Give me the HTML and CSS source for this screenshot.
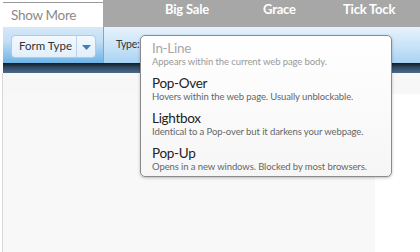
FILE: index.html
```html
<!DOCTYPE html>
<html>
<head>
<meta charset="utf-8">
<link rel="stylesheet" href="styles.css">
</head>
<body>
<div class="page">
  <div class="nav">
    <div class="tab-active">Show More</div>
    <div class="tabs">
      <span class="tab t1">Big Sale</span>
      <span class="tab t2">Grace</span>
      <span class="tab t3">Tick Tock</span>
    </div>
  </div>
  <div class="toolbar">
    <div class="tb-left">
      <div class="select">
        <span class="select-label">Form Type</span>
        <span class="select-arrow"><svg width="9" height="5" viewBox="0 0 9 5"><path d="M0 0H9L4.5 5Z" fill="#3b7fc0"/></svg></span>
      </div>
    </div>
    <div class="tb-right">
      <span class="type-label">Type:</span>
    </div>
  </div>
  <div class="darkbar"></div>
  <div class="content">
    <div class="strip"></div>
    <div class="main"></div>
  </div>
</div>
<div class="popup">
  <div class="item disabled">
    <div class="title">In-Line</div>
    <div class="desc">Appears within the current web page body.</div>
  </div>
  <div class="item">
    <div class="title">Pop-Over</div>
    <div class="desc">Hovers within the web page. Usually unblockable.</div>
  </div>
  <div class="item">
    <div class="title">Lightbox</div>
    <div class="desc">Identical to a Pop-over but it darkens your webpage.</div>
  </div>
  <div class="item">
    <div class="title">Pop-Up</div>
    <div class="desc">Opens in a new windows. Blocked by most browsers.</div>
  </div>
</div>
</body>
</html>
```
FILE: styles.css
```css
html, body {
  margin: 0;
  padding: 0;
  background: #fff;
  font-family: Lato, "Open Sans", sans-serif;
}
.page {
  width: 420px;
  height: 252px;
  overflow: hidden;
  display: flex;
  flex-direction: column;
}
.nav {
  height: 27px;
  display: flex;
  flex: none;
}
.tab-active {
  width: 100px;
  margin-left: 3px;
  border-top: 1px solid #999;
  margin-top: 2px;
  background: #fff;
  color: #8a8a8a;
  font-size: 13.5px;
  letter-spacing: -0.3px;
  padding: 4px 0 0 8px;
  box-sizing: border-box;
}
.tabs {
  flex: 1;
  background: #a7a7a7;
  position: relative;
  color: #fff;
  font-weight: bold;
  font-size: 13px;
  letter-spacing: -0.2px;
}
.tab {
  position: absolute;
  top: 1px;
}
.t1 { left: 62px; }
.t2 { left: 160px; }
.t3 { left: 240px; }
.toolbar {
  height: 36px;
  display: flex;
  flex: none;
  margin-left: 3px;
}
.tb-left {
  width: 101px;
  background: linear-gradient(#d6e8f8, #c2def5 40%, #6fb3e6);
  border-right: 1px solid #7aa9cf;
  display: flex;
  align-items: center;
  padding-left: 8px;
  box-sizing: border-box;
}
.select {
  width: 85px;
  height: 23px;
  border: 1px solid #a9cdec;
  border-radius: 4px;
  background: linear-gradient(#f3f9fe, #e2effa);
  display: flex;
  box-sizing: border-box;
  margin-top: 2px;
  flex: none;
}
.select-label {
  flex: 1;
  font-size: 11.5px;
  color: #333;
  padding: 3px 0 0 7px;
  white-space: nowrap;
}
.select-arrow {
  width: 18px;
  flex: none;
  border-left: 1px solid #b9d4ec;
  display: flex;
  align-items: center;
  justify-content: center;
  padding-top: 2px;
}
.tb-right {
  flex: 1;
  background: linear-gradient(#e6f2fc, #c5e1f7 60%, #a9d2f2);
  position: relative;
}
.type-label {
  position: absolute;
  left: 12px;
  top: 11px;
  font-size: 10.5px;
  color: #333;
  letter-spacing: -0.3px;
}
.darkbar {
  height: 10px;
  flex: none;
  margin-left: 3px;
  background: linear-gradient(#0f1a26, #2c4660 40%, #4b6b8b);
}
.content {
  flex: 1;
  display: flex;
  flex-direction: column;
  border-left: 1px solid #d8d8d8;
  margin-left: 2px;
}
.strip {
  height: 21px;
  background: #f7f7f7;
}
.main {
  flex: 1;
  width: 372px;
  background: #f8f8f8;
}
.popup {
  position: absolute;
  left: 140px;
  top: 35px;
  width: 252px;
  height: 142px;
  box-sizing: border-box;
  border: 1px solid #8a8a8a;
  border-radius: 5px;
  background: linear-gradient(#fff, #f6f6f6);
  box-shadow: 0 1px 3px rgba(0,0,0,0.25);
  padding: 4px 0 0 11px;
}
.item {
  height: 35px;
}
.title {
  font-size: 13.5px;
  letter-spacing: -0.3px;
  color: #222;
  line-height: 16px;
}
.desc {
  font-size: 9.5px;
  color: #666;
  line-height: 12px;
  letter-spacing: -0.1px;
}
.disabled .title { color: #a8a8a8; }
.disabled .desc { color: #9a9a9a; }
```
